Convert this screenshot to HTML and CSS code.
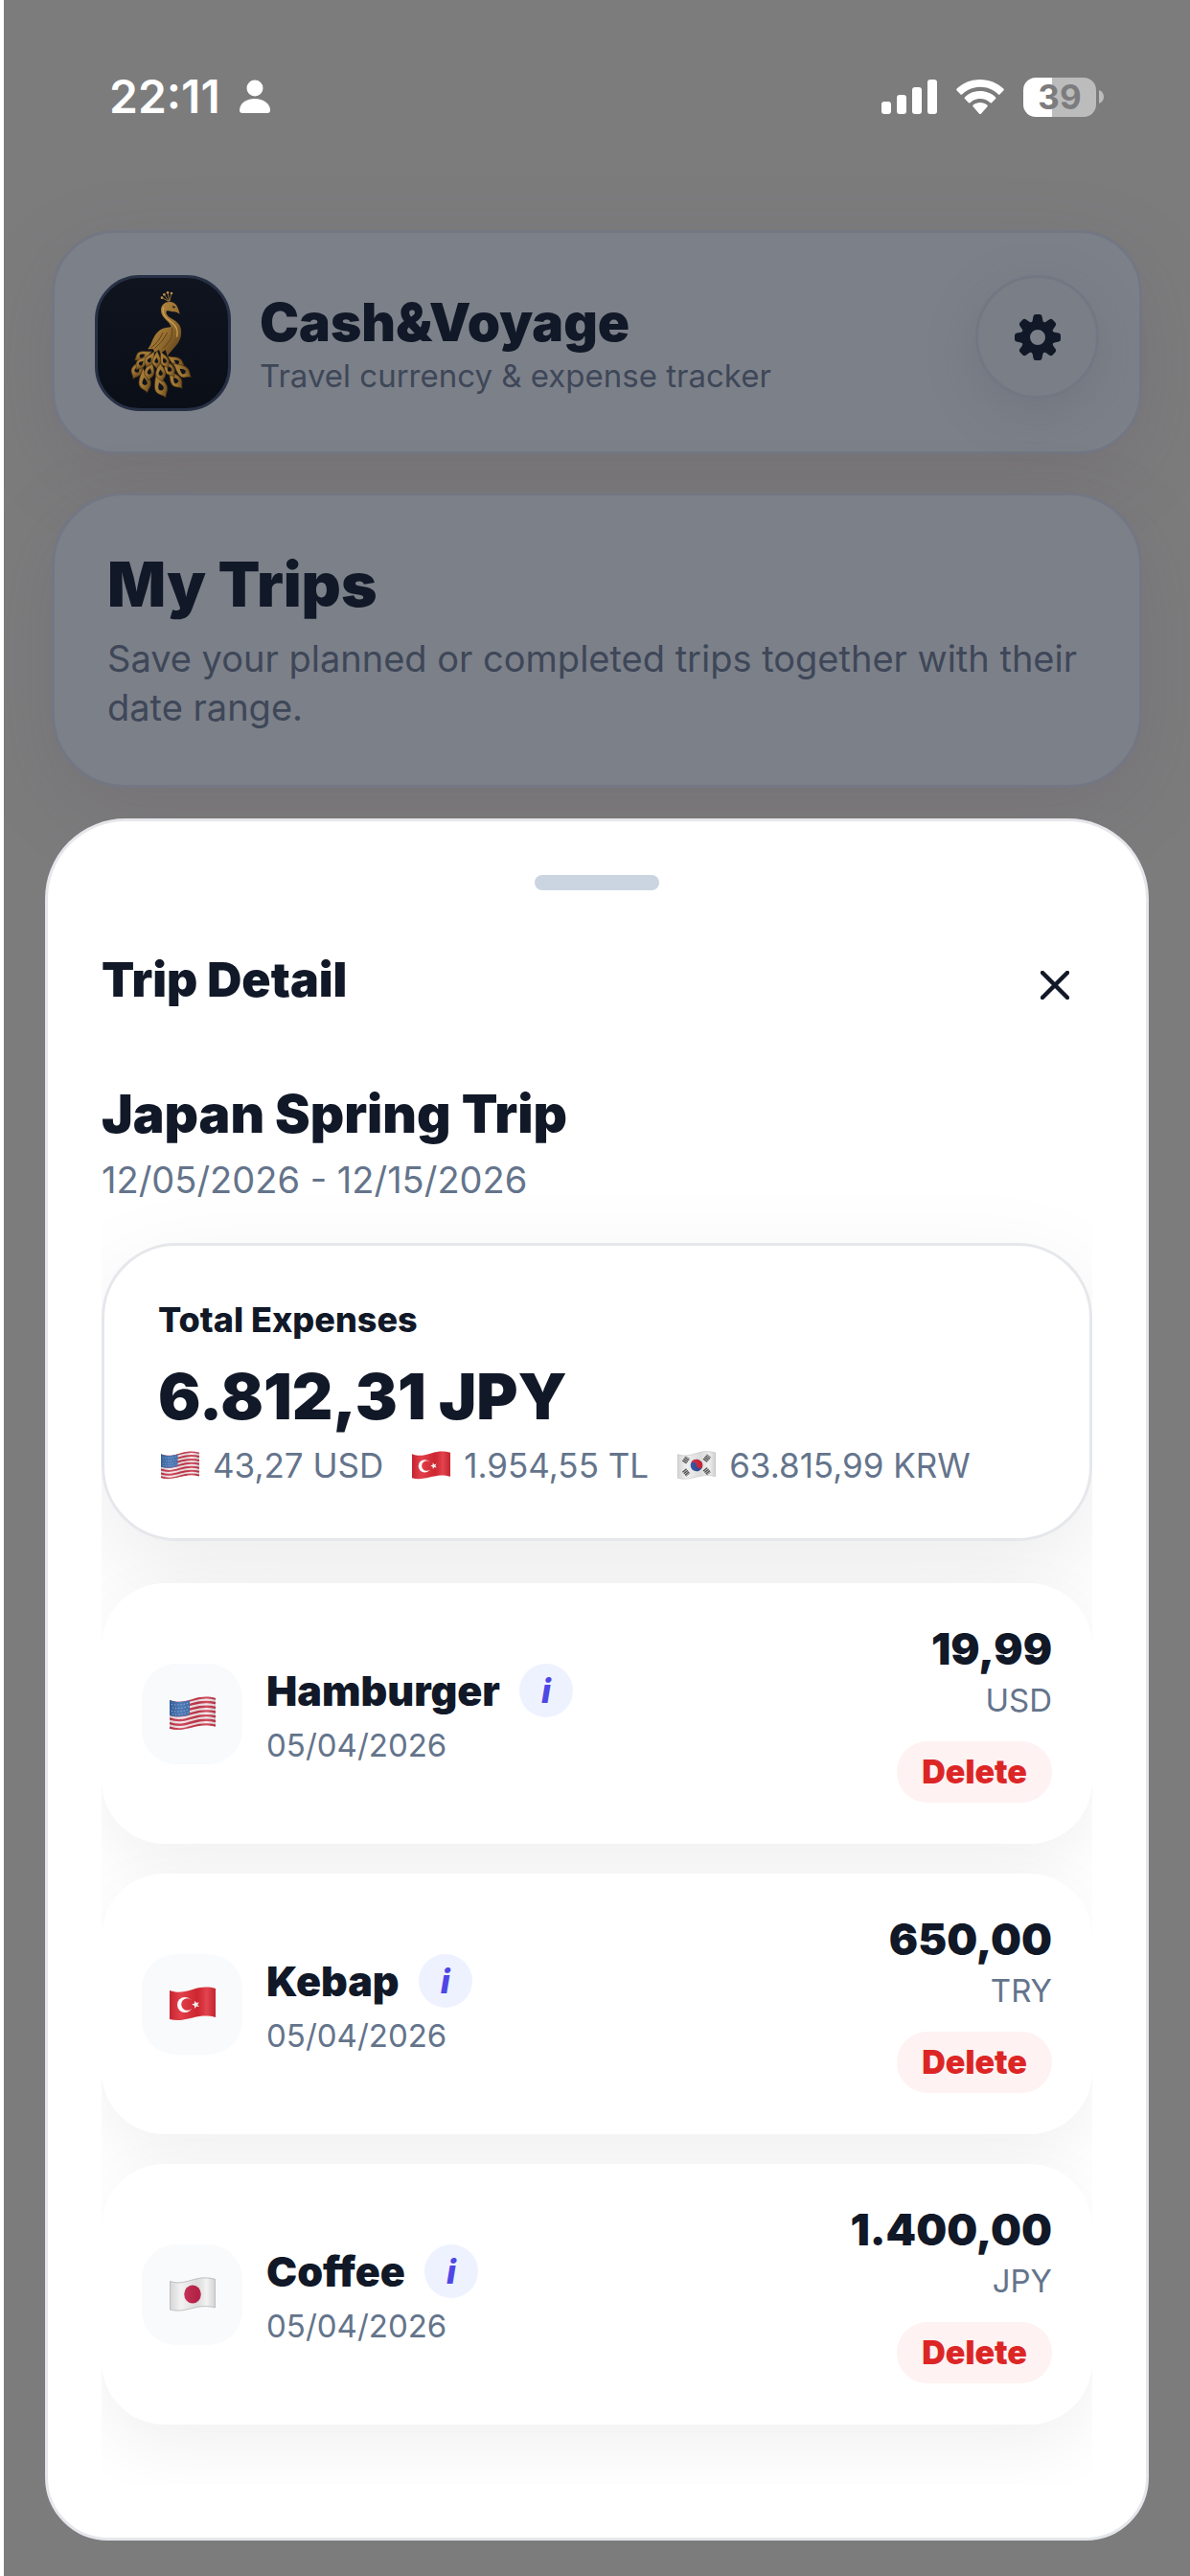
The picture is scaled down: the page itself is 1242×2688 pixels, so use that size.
FILE: index.html
```html
<!DOCTYPE html>
<html lang="en">
<head>
<meta charset="utf-8">
<meta name="viewport" content="width=device-width, initial-scale=1">
<title>Cash&amp;Voyage – Trip Detail</title>
<link rel="stylesheet" href="styles.css">
</head>
<body>
<svg class="defs" aria-hidden="true">
  <defs>
    <linearGradient id="fold" x1="0" x2="1" y1="0" y2="0">
      <stop offset="0" stop-color="#000" stop-opacity=".12"/>
      <stop offset=".25" stop-color="#fff" stop-opacity=".1"/>
      <stop offset=".6" stop-color="#000" stop-opacity=".08"/>
      <stop offset=".8" stop-color="#fff" stop-opacity=".12"/>
      <stop offset="1" stop-color="#000" stop-opacity=".14"/>
    </linearGradient>
    <clipPath id="cloth"><path d="M0 4C8 7 14 6 24 3S40 0 48 2V32C40 30 34 30 24 32.500S8 36 0 34Z"/></clipPath>
    <symbol id="flag-us" viewBox="0 0 48 36">
      <g clip-path="url(#cloth)">
        <path fill="#f6e6ea" d="M0 0H48V36H0Z"/>
        <g fill="none" stroke="#c8374a" stroke-width="2.400">
          <path d="M0 4.500C8 7.500 14 6.500 24 3.500S40 .5 48 2.500"/>
          <path d="M0 9.200C8 12.200 14 11.200 24 8.200S40 5.200 48 7.200"/>
          <path d="M0 13.900C8 16.900 14 15.900 24 12.900S40 9.900 48 11.900"/>
          <path d="M0 18.600C8 21.600 14 20.600 24 17.600S40 14.600 48 16.600"/>
          <path d="M0 23.300C8 26.300 14 25.300 24 22.300S40 19.300 48 21.300"/>
          <path d="M0 28C8 31 14 30 24 27S40 24 48 26"/>
          <path d="M0 32.700C8 35.700 14 34.700 24 31.700S40 28.700 48 30.700"/>
        </g>
        <path fill="#3c6cae" d="M0 3C8 7 14 6 21 4V19C14 21.500 8 22 0 20Z"/>
        <g fill="none" stroke="#a9c3e4" stroke-width="1" stroke-dasharray="1 2.200">
          <path d="M2 8.500C8 9.500 14 9 20 7"/><path d="M3 12C8 13 14 12.500 20 10.500"/><path d="M2 15.500C8 16.500 14 16 20 14"/><path d="M3 18.500C8 19.500 14 19 20 17"/>
        </g>
        <path fill="url(#fold)" d="M0 0H48V36H0Z"/>
      </g>
    </symbol>
    <symbol id="flag-tr" viewBox="0 0 48 36">
      <g clip-path="url(#cloth)">
        <path fill="#df2a36" d="M0 0H48V36H0Z"/>
        <circle cx="16" cy="19" r="8" fill="#fff"/>
        <circle cx="18.500" cy="18.500" r="6.300" fill="#df2a36"/>
        <path fill="#fff" d="M23 18.300l2.800-.6.300-3 1.800 2.300 2.800-.8-1.500 2.500 1.700 2.300-2.900-.5-1.700 2.400-.4-2.900z"/>
        <path fill="url(#fold)" d="M0 0H48V36H0Z"/>
      </g>
    </symbol>
    <symbol id="flag-kr" viewBox="0 0 48 36">
      <g clip-path="url(#cloth)">
        <path fill="#efefef" d="M0 0H48V36H0Z"/>
        <g transform="rotate(20 24 18)">
          <circle cx="24" cy="18" r="7.500" fill="#2f4f9f"/>
          <path fill="#d3283f" d="M16.500 18a7.500 7.500 0 0 1 15 0c-2 4-6 3-7.500 0s-5.500-4-7.500 0z"/>
        </g>
        <g fill="none" stroke="#444" stroke-width="6.500" stroke-dasharray="1.700 .7">
          <path d="M8.500 14.500l4.500-6.500"/><path d="M34.500 22.500l5 6"/><path d="M8.500 24l5 6"/><path d="M34.500 12.500l5-6.500"/>
        </g>
        <path fill="url(#fold)" d="M0 0H48V36H0Z"/>
      </g>
      <path fill="none" stroke="#c4c4c4" stroke-width=".8" d="M0.500 4.500C8 7 14 6 24 3S40 0.500 47.500 2.500V32C40 30 34 30 24 32.500S8 36 .5 34Z"/>
    </symbol>
    <symbol id="flag-jp" viewBox="0 0 48 36">
      <g clip-path="url(#cloth)">
        <path fill="#f1f1f1" d="M0 0H48V36H0Z"/>
        <ellipse cx="24" cy="18" rx="8.800" ry="9.600" fill="#c3244b"/>
        <path fill="url(#fold)" d="M0 0H48V36H0Z"/>
      </g>
      <path fill="none" stroke="#c0c0c0" stroke-width="1" d="M0.500 4.500C8 7 14 6 24 3S40 0.500 47.500 2.500V32C40 30 34 30 24 32.500S8 36 .5 34Z"/>
    </symbol>
  </defs>
</svg>

<div class="screen">
  <div class="status">
    <div class="status-side status-left">
      <span class="clock">22:11</span>
      <svg width="32" height="36" viewBox="0 0 32 36" fill="#fff" aria-hidden="true"><circle cx="16" cy="9" r="8.500"/><path d="M0 32C0 25 7 20 16 20s16 5 16 12q0 3-3 3H3q-3 0-3-3z"/></svg>
    </div>
    <div class="status-side">
      <svg width="58" height="36" viewBox="0 0 58 36" fill="#fff" aria-hidden="true"><rect y="23" width="10" height="13" rx="3"/><rect x="16" y="16" width="10" height="20" rx="3"/><rect x="32" y="8" width="10" height="28" rx="3"/><rect x="48" width="10" height="36" rx="3"/></svg>
      <svg width="50" height="36" viewBox="0 0 50 36" fill="#fff" aria-hidden="true"><path d="M25 0C34.500 0 43 3.700 49.300 9.600q1 1 0 2l-3.600 3.600q-1 1-2 0C38.700 10.500 32.200 7.800 25 7.800S11.300 10.500 6.300 15.200q-1 1-2 0L.7 11.600q-1-1 0-2C7 3.700 15.500 0 25 0z"/><path d="M25 12c6.200 0 11.700 2.300 15.900 6.200q1 1 0 2l-3.700 3.700q-1 1-2 .1C32.500 21.500 29 20 25 20s-7.500 1.500-10.200 4q-1 .9-2-.1l-3.700-3.700q-1-1 0-2C13.300 14.300 18.800 12 25 12z"/><path d="M25 24c2.900 0 5.400 1 7.300 2.600q1 .9 0 1.900l-6.200 6.900q-1.100 1.100-2.200 0l-6.200-6.900q-1-1 0-1.900C19.600 25 22.100 24 25 24z"/></svg>
      <span class="battery"><span class="battery-cell">39</span><svg width="5" height="14" viewBox="0 0 5 14" aria-hidden="true"><path fill="#bcbcbc" d="M0 0Q5 2 5 7T0 14Z"/></svg></span>
    </div>
  </div>

  <header class="card app-head">
    <svg class="logo" viewBox="57 50 426 426" role="img" aria-label="Golden peacock">
      <defs>
        <linearGradient id="gold" x1="0" y1="0" x2="1" y2="1"><stop offset="0" stop-color="#b98d45"/><stop offset=".55" stop-color="#997030"/><stop offset="1" stop-color="#543816"/></linearGradient>
        <linearGradient id="night" x1="0" y1="0" x2="0" y2="1"><stop offset="0" stop-color="#0f141f"/><stop offset="1" stop-color="#0a0e17"/></linearGradient>
        <g id="plume"><path fill="url(#gold)" stroke="#3c2a12" stroke-width="2" d="M0 -40C5 -24 19 -10 17 6C16 17 8 20 3 32C-2 22 -16 18 -17 6C-18 -10 -5 -24 0 -40Z"/><path fill="#10131a" d="M0 -12C5 -4 8 0 7 6Q0 14 -7 6C-8 0 -5 -4 0 -12Z"/></g>
      </defs>
      <rect x="61.500" y="54.500" width="417" height="417" rx="136" fill="url(#night)" stroke="#273044" stroke-width="9"/>
      <g>
        <use href="#plume" transform="translate(205 303) rotate(66) scale(.85)"/>
        <use href="#plume" transform="translate(313 322) rotate(-58) scale(.85)"/>
        <use href="#plume" transform="translate(332 351) rotate(-50)"/>
        <use href="#plume" transform="translate(190 346) rotate(30)"/>
        <use href="#plume" transform="translate(310 380) rotate(-34)"/>
        <use href="#plume" transform="translate(213 384) rotate(-8) scale(1.100)"/>
        <use href="#plume" transform="translate(263 400) rotate(-20) scale(1.150)"/>
        <use href="#plume" transform="translate(202 326) rotate(44) scale(.8)"/>
        <use href="#plume" transform="translate(290 344) rotate(-28) scale(.9)"/>
        <use href="#plume" transform="translate(228 352) rotate(12) scale(.9)"/>
        <use href="#plume" transform="translate(263 356) rotate(-6) scale(.9)"/>
        <use href="#plume" transform="translate(228 316) rotate(30) scale(.8)"/>
        <use href="#plume" transform="translate(275 318) rotate(-22) scale(.8)"/>
        <use href="#plume" transform="translate(250 318) rotate(4) scale(.8)"/>
      </g>
      <path fill="url(#gold)" d="M222 282C236 268 238 240 256 226C270 214 288 214 296 212C290 192 262 184 264 158C265 140 282 130 298 135C312 138 318 152 323 172C316 168 310 164 303 165C296 165 290 160 282 162C276 172 288 182 300 188C322 200 330 214 327 238C324 264 300 280 284 304L278 284L262 296L258 284L244 292L240 282Z"/>
      <path fill="none" stroke="#c9a055" stroke-width="4" stroke-linecap="round" d="M272 152C266 176 284 188 300 200C314 212 318 226 314 242"/>
      <path fill="none" stroke="#5f431c" stroke-width="3" d="M298 214C304 246 288 262 270 280M284 230Q270 260 244 280M270 230Q256 262 232 278"/>
      <path fill="#15151a" d="M298 146l12 4-6 4z"/>
      <path fill="none" stroke="#a57d3c" stroke-width="2.500" d="M287 132L268 121M288 132L275 112M290 132L285 106M291 132L296 108"/>
      <g fill="#b98d48"><circle cx="267" cy="121" r="4"/><circle cx="274" cy="111" r="4"/><circle cx="285" cy="105" r="4"/><circle cx="297" cy="107" r="4"/></g>
    </svg>
    <div class="app-names">
      <h1 class="app-title">Cash&amp;Voyage</h1>
      <p class="app-sub">Travel currency &amp; expense tracker</p>
    </div>
    <button class="gear" type="button" aria-label="Settings">
      <svg width="48" height="48" viewBox="-24 -24 48 48" aria-hidden="true">
        <defs><path id="tooth" d="M-7 -14Q-5 -17 -4.500 -22Q-4 -24 -2 -24H2Q4 -24 4.500 -22Q5 -17 7 -14Z"/></defs>
        <circle r="12.500" fill="none" stroke="#111827" stroke-width="9"/>
        <g fill="#111827"><use href="#tooth"/><use href="#tooth" transform="rotate(45)"/><use href="#tooth" transform="rotate(90)"/><use href="#tooth" transform="rotate(135)"/><use href="#tooth" transform="rotate(180)"/><use href="#tooth" transform="rotate(225)"/><use href="#tooth" transform="rotate(270)"/><use href="#tooth" transform="rotate(315)"/></g>
      </svg>
    </button>
  </header>

  <section class="card trips">
    <h2 class="trips-title">My Trips</h2>
    <p class="trips-text">Save your planned or completed trips together with their date range.</p>
  </section>

  <section class="sheet" role="dialog" aria-labelledby="sheet-title">
    <div class="handle"></div>
    <div class="sheet-head">
      <h2 class="sheet-title" id="sheet-title">Trip Detail</h2>
      <button class="close" type="button" aria-label="Close">
        <svg width="30" height="30" viewBox="0 0 30 30" aria-hidden="true"><path d="M2 2L28 28M28 2L2 28" stroke="#111827" stroke-width="4.500" stroke-linecap="round"/></svg>
      </button>
    </div>

    <div class="detail">
      <h3 class="trip-name">Japan Spring Trip</h3>
      <p class="trip-dates">12/05/2026 - 12/15/2026</p>

      <div class="total">
        <p class="total-label">Total Expenses</p>
        <p class="total-value">6.812,31 JPY</p>
        <ul class="rates">
          <li><svg class="flag-small"><use href="#flag-us"/></svg>43,27 USD</li>
          <li><svg class="flag-small"><use href="#flag-tr"/></svg>1.954,55 TL</li>
          <li><svg class="flag-small"><use href="#flag-kr"/></svg>63.815,99 KRW</li>
        </ul>
      </div>

      <ul class="expenses">
        <li class="expense">
          <span class="tile"><svg class="flag"><use href="#flag-us"/></svg></span>
          <div class="what">
            <div class="name-row"><span class="name">Hamburger</span><button class="info" type="button" aria-label="About Hamburger">i</button></div>
            <p class="date">05/04/2026</p>
          </div>
          <div class="cost">
            <span class="amount">19,99</span>
            <span class="unit">USD</span>
            <button class="delete" type="button">Delete</button>
          </div>
        </li>
        <li class="expense">
          <span class="tile"><svg class="flag"><use href="#flag-tr"/></svg></span>
          <div class="what">
            <div class="name-row"><span class="name">Kebap</span><button class="info" type="button" aria-label="About Kebap">i</button></div>
            <p class="date">05/04/2026</p>
          </div>
          <div class="cost">
            <span class="amount">650,00</span>
            <span class="unit">TRY</span>
            <button class="delete" type="button">Delete</button>
          </div>
        </li>
        <li class="expense">
          <span class="tile"><svg class="flag"><use href="#flag-jp"/></svg></span>
          <div class="what">
            <div class="name-row"><span class="name">Coffee</span><button class="info" type="button" aria-label="About Coffee">i</button></div>
            <p class="date">05/04/2026</p>
          </div>
          <div class="cost">
            <span class="amount">1.400,00</span>
            <span class="unit">JPY</span>
            <button class="delete" type="button">Delete</button>
          </div>
        </li>
      </ul>
    </div>
  </section>
</div>
</body>
</html>
```
FILE: styles.css
```css
* { box-sizing: border-box; }

html { background: #fff; }

body {
  margin: 0;
  font-family: Inter, "Liberation Sans", sans-serif;
  color: #111827;
}

h1, h2, h3, p, ul { margin: 0; padding: 0; }
ul { list-style: none; }
svg { display: block; flex: none; }
button { border: 0; padding: 0; margin: 0; font-family: inherit; cursor: pointer; }

.defs { position: absolute; width: 0; height: 0; }

.screen {
  margin-left: 4px;
  min-height: 100vh;
  padding-bottom: 36px;
  background: #7c7c7d;
  overflow: hidden;
}

/* Status bar */
.status {
  display: flex;
  justify-content: space-between;
  height: 240px;
  padding: 80px 90px 0 110px;
  color: #fff;
}
.status-side { display: flex; align-items: center; gap: 20px; height: 42px; }
.clock { font-size: 48px; font-weight: 600; line-height: 42px; }
.battery { display: flex; align-items: center; gap: 3px; }
.battery-cell {
  width: 76px;
  border-radius: 13px;
  background: linear-gradient(90deg, #fff 30px, #bcbcbc 30px);
  color: #7c7c7e;
  font-size: 35px;
  font-weight: 700;
  line-height: 41px;
  text-align: center;
}

/* Cards behind the sheet */
.card {
  margin: 0 50px;
  border: 3px solid #737783;
  background: #7c8089;
  box-shadow: 0 24px 84px rgba(88, 68, 82, .16);
}
.app-head {
  display: flex;
  align-items: flex-start;
  gap: 30px;
  padding: 44px 42px 42px;
  border-radius: 66px;
}
.logo { width: 142px; height: 142px; }
.app-names { flex: 1; align-self: center; }
.app-title { font-size: 55px; font-weight: 900; line-height: 64px; }
.app-sub { margin-top: 4px; font-size: 33px; line-height: 40px; color: #3e4758; }
.gear {
  display: flex;
  align-items: center;
  justify-content: center;
  width: 129px;
  height: 129px;
  border: 3px solid #737783;
  border-radius: 50%;
  background: #7a7e86;
  box-shadow: 0 16px 54px rgba(80, 80, 96, .22);
}

.trips { margin-top: 40px; padding: 55px; border-radius: 76px; }
.trips-title { font-size: 64px; font-weight: 900; line-height: 76px; }
.trips-text { margin-top: 14px; font-size: 38px; line-height: 51px; color: #3e4758; }

/* Trip detail sheet */
.sheet {
  margin: 32px 43px 0;
  padding: 56px;
  border: 3px solid #e5e7eb;
  border-radius: 84px 84px 66px 66px;
  background: #fff;
}
.handle { width: 130px; height: 16px; margin: 0 auto 60px; border-radius: 8px; background: #cbd5e1; }
.sheet-head { display: flex; justify-content: space-between; align-items: flex-start; }
.sheet-title { font-size: 50px; font-weight: 900; line-height: 66px; }
.close {
  display: flex;
  align-items: center;
  justify-content: center;
  width: 78px;
  height: 78px;
  background: none;
}

.detail { margin-top: 40px; padding: 23px 0 62px; overflow: hidden; }
.trip-name { font-size: 55px; font-weight: 900; line-height: 64px; }
.trip-dates { margin-top: 14px; font-size: 38px; line-height: 46px; color: #64748b; }

.total {
  margin-top: 43px;
  padding: 56px 56px 54px;
  border: 3px solid #e5e7eb;
  border-radius: 78px;
  background: #fff;
  box-shadow: 0 36px 108px rgba(0, 0, 0, .08);
}
.total-label { font-size: 36px; font-weight: 800; line-height: 42px; }
.total-value { margin-top: 20px; font-size: 66px; font-weight: 900; line-height: 78px; }
.rates {
  display: flex;
  flex-wrap: wrap;
  gap: 0 30px;
  margin: 11px 0 0 3px;
  font-size: 35px;
  line-height: 44px;
  color: #64748b;
}
.rates li { display: flex; align-items: center; gap: 14px; }
.flag-small { width: 40px; height: 30px; }

.expenses { display: flex; flex-direction: column; gap: 31px; margin-top: 44px; }
.expense {
  display: flex;
  align-items: center;
  gap: 25px;
  padding: 43px 42px;
  border-radius: 66px;
  background: #fff;
  box-shadow: 0 24px 72px rgba(0, 0, 0, .06);
}
.tile {
  display: flex;
  align-items: center;
  justify-content: center;
  width: 105px;
  height: 105px;
  border-radius: 36px;
  background: #f8fafc;
}
.flag { width: 48px; height: 36px; }
.what { flex: 1; }
.name-row { display: flex; align-items: center; gap: 20px; }
.name { font-size: 43px; font-weight: 900; line-height: 56px; }
.info {
  width: 56px;
  height: 56px;
  border-radius: 50%;
  background: #eef2ff;
  color: #4f46e5;
  font-size: 35px;
  font-style: italic;
  font-weight: 800;
  line-height: 56px;
}
.date { margin-top: 9px; font-size: 33px; line-height: 40px; color: #64748b; }
.cost { display: flex; flex-direction: column; align-items: flex-end; }
.amount { font-size: 45px; font-weight: 900; line-height: 52px; }
.unit { margin-top: 8px; font-size: 33px; line-height: 38px; color: #64748b; }
.delete {
  margin-top: 24px;
  padding: 0 26px;
  border-radius: 32px;
  background: #fef2f2;
  color: #dc2626;
  font-size: 34px;
  font-weight: 900;
  line-height: 64px;
}
```
